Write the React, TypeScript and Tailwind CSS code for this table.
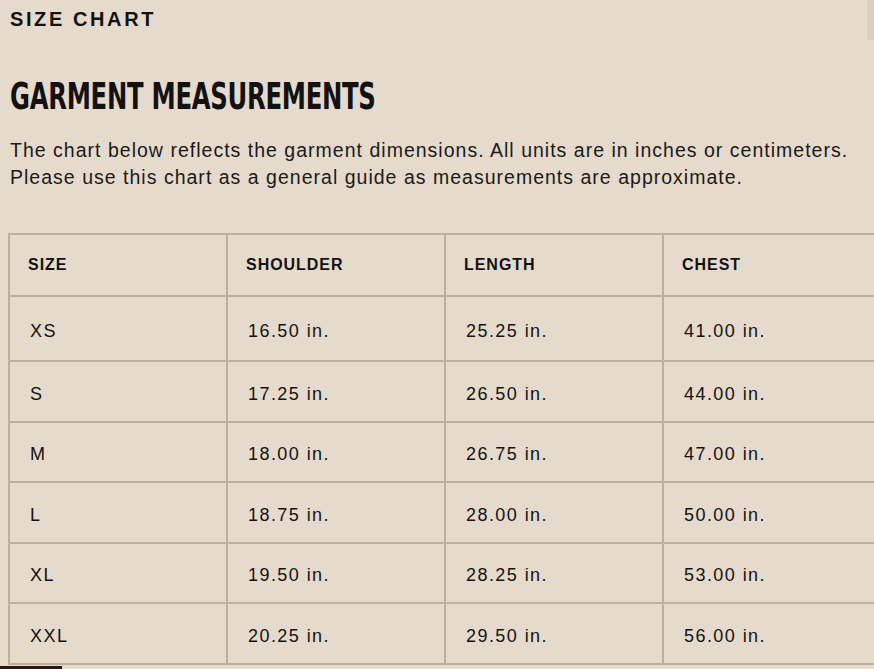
import React from "react";

const rows = [
  ["XS", "16.50 in.", "25.25 in.", "41.00 in."],
  ["S", "17.25 in.", "26.50 in.", "44.00 in."],
  ["M", "18.00 in.", "26.75 in.", "47.00 in."],
  ["L", "18.75 in.", "28.00 in.", "50.00 in."],
  ["XL", "19.50 in.", "28.25 in.", "53.00 in."],
  ["XXL", "20.25 in.", "29.50 in.", "56.00 in."],
];

const heads = ["SIZE", "SHOULDER", "LENGTH", "CHEST"];

export default function App() {
  return (
    <div className="relative w-[874px] h-[669px] overflow-hidden bg-[#e5dbcc] text-[#141210] font-['Liberation_Sans',Arial,sans-serif]">
      <div className="pl-[10px] pt-[7px]">
        <h2 className="text-[20px] leading-[24px] font-bold tracking-[0.13em]">SIZE CHART</h2>

        <h1 className="mt-[44px] text-[37px] leading-[44px] font-bold font-['DejaVu_Sans_Condensed','DejaVu_Sans',sans-serif] tracking-[-0.01em] origin-left scale-x-[0.73] whitespace-nowrap">
          GARMENT MEASUREMENTS
        </h1>

        <p className="mt-[18px] text-[19.5px] leading-[27px] tracking-[0.052em] text-[#1b1917] whitespace-nowrap">
          The chart below reflects the garment dimensions. All units are in inches or centimeters.
          <br />
          Please use this chart as a general guide as measurements are approximate.
        </p>
      </div>

      <table className="ml-[8px] mt-[42px] border-collapse border-2 border-[#bbafa1] table-fixed w-[872px]">
        <thead>
          <tr className="h-[62px]">
            {heads.map((h) => (
              <th
                key={h}
                className="w-[218px] border-2 border-[#bbafa1] pl-[18px] text-left align-middle text-[16px] font-bold tracking-[0.06em]"
              >
                {h}
              </th>
            ))}
          </tr>
        </thead>
        <tbody>
          {rows.map((r, i) => (
            <tr key={r[0]} className={i === 0 ? "h-[65px]" : "h-[60.5px]"}>
              {r.map((c, j) => (
                <td
                  key={j}
                  className="border-2 border-[#bbafa1] pl-[20px] pt-[6px] align-middle text-[18px] tracking-[0.08em]"
                >
                  {c}
                </td>
              ))}
            </tr>
          ))}
        </tbody>
      </table>

      <div className="absolute right-0 top-0 w-[7px] h-[40px] bg-[#d8cdbe]" />
      <div className="absolute left-0 bottom-0 w-[62px] h-[3px] bg-[#2b1411]" />
    </div>
  );
}
